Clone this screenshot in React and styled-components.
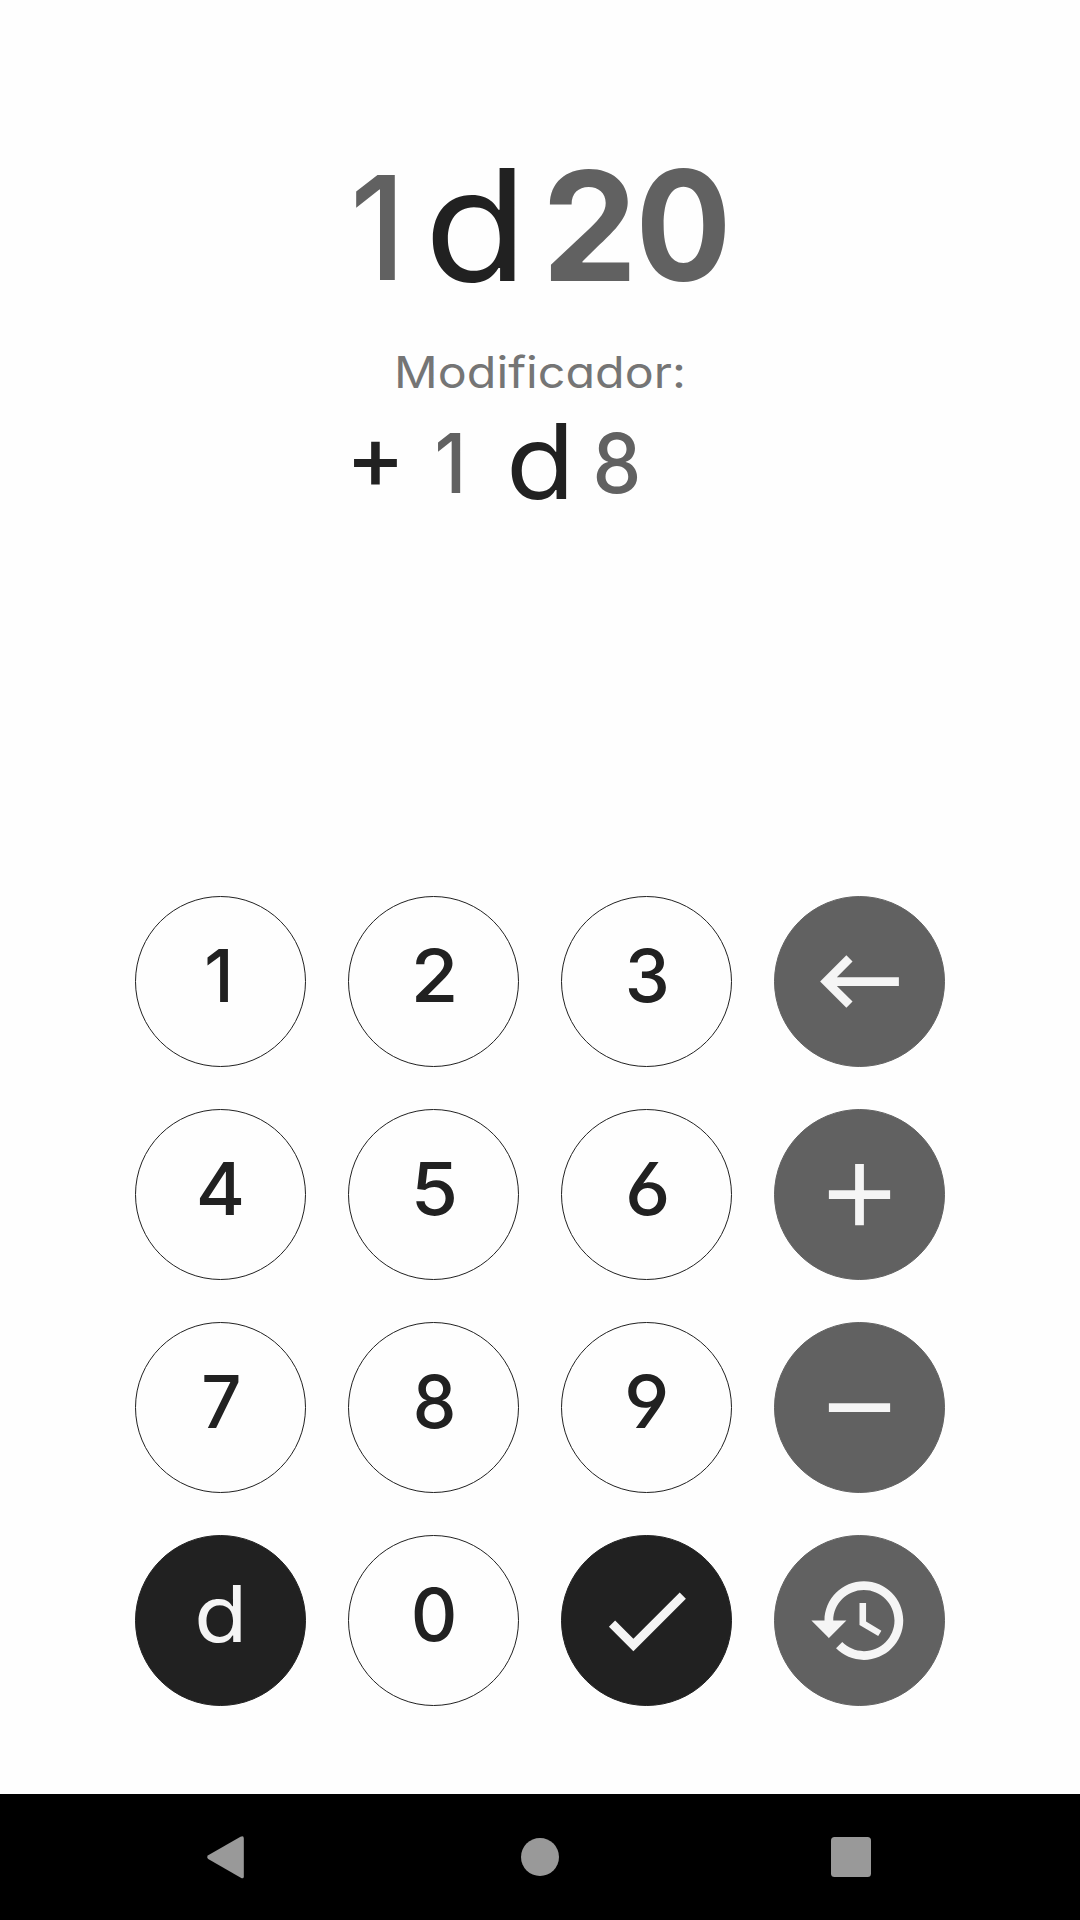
import React from 'react';
import styled, { createGlobalStyle } from 'styled-components';

const ink = '#212121';
const grey = '#616161';
const light = '#f5f5f5';

const GlobalStyle = createGlobalStyle`
  body { margin: 0; background: #fefefe; }
  *, *::before, *::after { box-sizing: border-box; }
`;

const Screen = styled.main`
  display: flex;
  flex-direction: column;
  width: 1080px;
  height: 1920px;
  overflow: hidden;
  background: #fefefe;
  font-family: Inter, 'Liberation Sans', sans-serif;
  font-feature-settings: 'cv03', 'cv04', 'cv11';
`;

const Display = styled.header`
  height: 896px;
  padding-top: 135px;
`;

const Formula = styled.div`
  display: flex;
  align-items: baseline;
  height: 210px;
  padding-left: 356px;
  line-height: 180px;
`;

const ModifierFormula = styled(Formula)`
  height: 116px;
  padding-left: 354px;
  line-height: 116px;
`;

const Slot = styled.span`
  display: flex;
  justify-content: center;
  width: ${(p) => p.$width}px;
  margin-right: ${(p) => p.$gap || 0}px;
  color: ${(p) => p.$color};
  font-size: ${(p) => p.$size}px;
  font-weight: ${(p) => p.$weight};
`;

const Glyph = styled.span`
  display: block;
  transform: translate(${(p) => p.$dx || 0}px, ${(p) => p.$dy || 0}px) scaleX(${(p) => p.$stretch || 1});
`;

const Label = styled.div`
  height: 53px;
  color: #757575;
  font-size: 44px;
  font-weight: 400;
  line-height: 54px;
  text-align: center;
  transform: scaleX(1.1);
`;

const Keypad = styled.section`
  display: grid;
  grid-template-columns: repeat(4, 171px);
  grid-auto-rows: 171px;
  gap: 42px;
  justify-content: center;
`;

const Key = styled.button`
  display: flex;
  align-items: center;
  justify-content: center;
  padding: 0 0 ${(p) => (p.$icon ? 0 : 11)}px;
  border: 1px solid ${(p) => p.$fill || ink};
  border-radius: 50%;
  background: ${(p) => p.$fill || 'transparent'};
  color: ${(p) => (p.$fill ? light : ink)};
  font-family: inherit;
  font-feature-settings: inherit;
  font-size: ${(p) => p.$size || 73}px;
  font-weight: ${(p) => p.$weight || 460};
  line-height: 88px;
`;

const Icon = styled.svg`
  display: block;
  width: 105px;
  height: 105px;
  fill: currentColor;
`;

const NavBar = styled.nav`
  display: flex;
  align-items: center;
  height: 126px;
  margin-top: auto;
  padding-left: 207px;
  background: #000;
`;

const NavIcon = styled.svg`
  display: block;
  width: ${(p) => p.$w}px;
  height: ${(p) => p.$h}px;
  margin-right: ${(p) => p.$gap || 0}px;
  fill: #999;
`;

const paths = {
  back: 'M21 11H6.83l3.58-3.59L9 6l-6 6 6 6 1.41-1.41L6.83 13H21z',
  plus: 'M19 13h-6v6h-2v-6H5v-2h6V5h2v6h6z',
  minus: 'M19 13H5v-2h14z',
  check: 'M9 16.17L4.83 12l-1.42 1.41L9 19 21 7l-1.41-1.41z',
  history:
    'M13 3c-4.97 0-9 4.03-9 9H1l3.89 3.89.07.14L9 12H6c0-3.87 3.13-7 7-7s7 3.13 7 7-3.13 7-7 7c-1.93 0-3.68-.79-4.94-2.06l-1.42 1.42C8.27 19.99 10.51 21 13 21c4.97 0 9-4.03 9-9s-4.03-9-9-9zm-1 5v5l4.28 2.54.72-1.21-3.5-2.08V8H12z',
};

const keys = [
  { text: '1', stretch: 0.97, dx: -1.2 },
  { text: '2', stretch: 1.06, dx: 1 },
  { text: '3', stretch: 0.985, dx: 0.5 },
  { icon: 'back', fill: grey },
  { text: '4', stretch: 1.03, dx: -0.5 },
  { text: '5', stretch: 1.05, dx: 1 },
  { text: '6', stretch: 1.05, dx: 1.2 },
  { icon: 'plus', fill: grey },
  { text: '7', stretch: 0.966, dx: 0.5 },
  { text: '8', stretch: 0.948, dx: 0.5 },
  { text: '9', stretch: 1.05 },
  { icon: 'minus', fill: grey },
  { text: 'd', stretch: 1.11, dy: -1, size: 78, weight: 400, fill: ink },
  { text: '0', stretch: 0.99, dx: 0.5 },
  { icon: 'check', fill: ink },
  { icon: 'history', fill: grey },
];

function Token({ text, width, gap, color, size, weight, stretch, dx, dy }) {
  return (
    <Slot $width={width} $gap={gap} $color={color} $size={size} $weight={weight}>
      <Glyph $stretch={stretch} $dx={dx} $dy={dy}>{text}</Glyph>
    </Slot>
  );
}

export default function App() {
  return (
    <Screen>
      <GlobalStyle />
      <Display>
        <Formula>
          <Token text="1" width={38} gap={38} color={grey} size={144} weight={500} stretch={0.93} dx={3} dy={-1} />
          <Token text="d" width={84} gap={34} color={ink} size={156} weight={420} stretch={1.08} dx={2} />
          <Token text="2" width={79} gap={14} color={grey} size={152} weight={680} dx={0.2} />
          <Token text="0" width={82} color={grey} size={153} weight={660} stretch={0.93} />
        </Formula>
        <Label>Modificador:</Label>
        <ModifierFormula>
          <Token text="+" width={43} gap={41} color={ink} size={89} weight={500} dy={-5} />
          <Token text="1" width={22} gap={51} color={grey} size={82.5} weight={500} stretch={0.93} dx={1.2} dy={-1} />
          <Token text="d" width={56} gap={30} color={ink} size={104} weight={420} stretch={1.08} dx={1.5} dy={5} />
          <Token text="8" width={40} color={grey} size={82.5} weight={470} stretch={0.94} dy={-1} />
        </ModifierFormula>
      </Display>
      <Keypad>
        {keys.map((k) => (
          <Key key={k.text || k.icon} $fill={k.fill} $icon={!!k.icon} $size={k.size} $weight={k.weight} aria-label={k.text || k.icon}>
            {k.icon ? (
              <Icon viewBox="0 0 24 24"><path d={paths[k.icon]} /></Icon>
            ) : (
              <Glyph $stretch={k.stretch} $dx={k.dx} $dy={k.dy}>{k.text}</Glyph>
            )}
          </Key>
        ))}
      </Keypad>
      <NavBar>
        <NavIcon $w={37} $h={43} $gap={277} viewBox="0 0 37 43">
          <path d="M1.2 19.3 33.5.8Q36.8-.8 36.8 2.6V40.4Q36.8 43.4 33.8 41.8L1.2 22.9Q-.8 21.1 1.2 19.3Z" />
        </NavIcon>
        <NavIcon $w={38} $h={38} $gap={272} viewBox="0 0 38 38"><circle cx="19" cy="19" r="19" /></NavIcon>
        <NavIcon $w={40} $h={40} viewBox="0 0 40 40"><rect width="40" height="40" rx="3.5" /></NavIcon>
      </NavBar>
    </Screen>
  );
}
